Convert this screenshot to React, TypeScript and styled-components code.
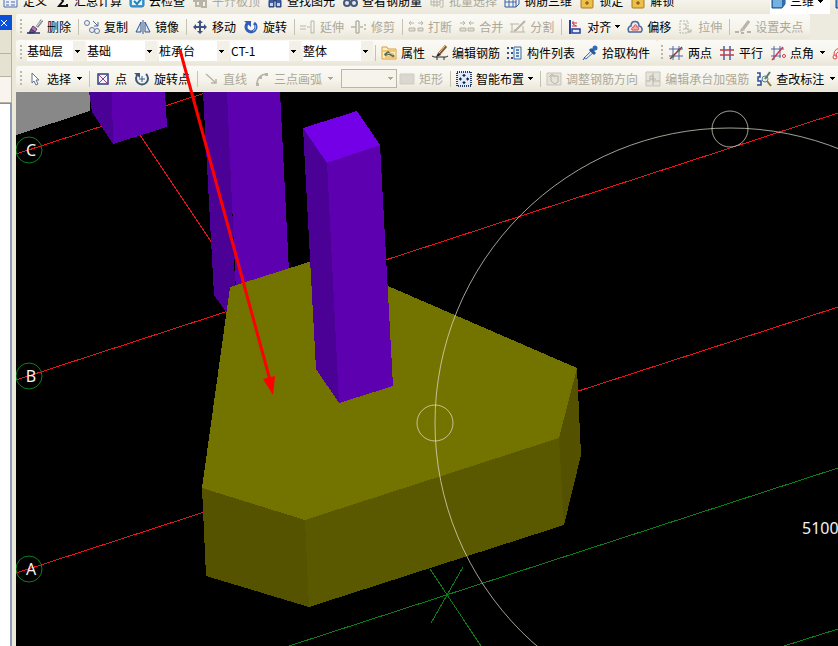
import React from "react";
import styled, { createGlobalStyle } from "styled-components";

const GlobalStyle = createGlobalStyle`
  * { box-sizing: border-box; }
  html, body { margin: 0; }
  body {
    overflow: hidden;
    background: #ece9d8;
    color: #000;
    font: 12px/16px "Noto Sans CJK SC", sans-serif;
  }
`;

const Page = styled.div`
  position: relative;
  display: flex;
  flex-direction: column;
  height: 100vh;
  overflow: hidden;
`;

const Body = styled.div`
  display: flex;
  flex: 1;
  min-height: 0;
`;

const TopBar = styled.div`
  display: flex;
  align-items: flex-end;
  height: 14px;
  flex: none;
  padding-left: 3px;
  overflow: hidden;
  background: linear-gradient(#f5f4ec, #ebe8da);
`;

const SidePanel = styled.aside`
  display: flex;
  flex-direction: column;
  width: 12px;
  flex: none;
  padding-top: 1px;
`;

const CloseButton = styled.button`
  display: flex;
  justify-content: center;
  align-items: center;
  height: 15px;
  padding: 0 4px 0 0;
  border: 0;
  background: #0b50d8;
`;

const SideTab = styled.div<{ $tone: string; $height: number }>`
  height: ${(p) => p.$height}px;
  border-right: 1px solid #b5b3a8;
  border-bottom: 1px solid #b5b3a8;
  background: ${(p) => p.$tone};
`;

const SideContent = styled.div`
  flex: 1;
  border-top: 1px solid #7f8fb0;
  border-right: 2px solid #8e9bb8;
  background: #fff;
`;

const Splitter = styled.div`
  width: 4px;
  flex: none;
  background: #ece9d8;
`;

const Main = styled.main`
  display: flex;
  flex-direction: column;
  flex: 1;
  min-width: 0;
`;

const ToolRow = styled.div`
  display: flex;
  height: 26px;
  flex: none;
  background: #edebdf;
`;

const Bar = styled.div<{ $fill?: boolean }>`
  display: flex;
  align-items: center;
  flex: ${(p) => (p.$fill ? "1 0 auto" : "none")};
  height: 25px;
  border-radius: 3px;
  background: linear-gradient(#fbfaf6, #f5f3ea 60%, #e9e6d8);
`;

const Grip = styled.span`
  width: 2px;
  height: 16px;
  flex: none;
  margin: 0 5px 0 4px;
  background: repeating-linear-gradient(#bcb9a8 0 2px, transparent 2px 4px);
`;

const Separator = styled.span`
  width: 6px;
  height: 16px;
  flex: none;
  border-left: 1px solid #c5c2b2;
`;

const Tool = styled.button<{ $boxed?: boolean; $gap?: number }>`
  display: flex;
  align-items: center;
  gap: ${(p) => p.$gap ?? 4}px;
  height: 26px;
  flex: none;
  padding: 0 7px 0 0;
  border: 0;
  background: ${(p) => (p.$boxed ? "#fff" : "transparent")};
  color: #000;
  font: inherit;
  white-space: nowrap;

  &:disabled {
    color: #aca899;
  }
`;

const TopSpacer = styled.span`
  flex: 1;
`;

const TopEdge = styled.div`
  display: flex;
  gap: 4px;
  width: 68px;
  flex: none;
`;

const Field = styled.div<{ $width: number }>`
  display: grid;
  align-items: center;
  width: ${(p) => p.$width}px;
  height: 20px;
  flex: none;
  margin: 0 2px 3px 0;
  background: linear-gradient(to left, #f3f1e7 12px, #fff 12px);

  > * {
    grid-area: 1 / 1;
  }
  > svg {
    justify-self: end;
    margin-right: 5px;
    pointer-events: none;
  }
`;

const Select = styled.select`
  appearance: none;
  width: 100%;
  height: 20px;
  padding: 0 12px 0 0;
  border: 0;
  background: transparent;
  color: #000;
  font: inherit;
`;

const EmptyField = styled(Field)`
  height: 19px;
  margin: 0 2px 0 1px;
  border: 1px solid #b9b6a6;
  background: #f5f3ea;
  color: #aca899;

  > svg {
    margin-right: 3px;
  }
  > select {
    height: 16px;
  }
`;

const Viewport = styled.section`
  flex: 1;
  min-height: 0;
  background: #000;

  > svg {
    display: block;
    width: 100%;
    height: 100%;
  }
`;

const Annotation = styled.svg`
  position: absolute;
  top: 0;
  left: 0;
  pointer-events: none;
`;

const Glyph = styled.svg`
  width: 16px;
  height: 16px;
  flex: none;
  fill: none;
`;

const Caption = styled.span<{ $wide?: boolean }>`
  padding-right: ${(p) => (p.$wide ? 2 : 0)}px;
`;

const ArrowGlyph = styled.svg`
  width: 5px;
  height: 3px;
  flex: none;
  fill: currentColor;
`;

const Drop = () => (
  <ArrowGlyph viewBox="0 0 5 3" shapeRendering="crispEdges">
    <path d="M0 0h5v1H4v1H3v1H2V2H1V1H0z" />
  </ArrowGlyph>
);

const navy = "#30528f";
const gray = "#b8b5a7";

const icons: Record<string, React.ReactNode> = {
  define: (
    <>
      <path d="M1 4h13v10H1z" fill="#eaf1fb" stroke="#4c6ca8" />
      <path d="M3 9h3M8 9h4M3 12h3M8 12h4" stroke="#4c6ca8" />
    </>
  ),
  sigma: <path d="M13 4V3H5l4 5-4 5h8v-2" stroke="#111" strokeWidth="2" />,
  cloud: (
    <>
      <rect x="1" y="1" width="14" height="13" rx="2" fill="#3d9bd0" stroke="#2c7fb2" />
      <path d="M3 4h10v8H3z" fill="#e6f6fd" />
      <path d="M5 8l3 3 5-6" stroke="#2280bd" strokeWidth="2" />
    </>
  ),
  slab: <path d="M2 2h11v6H2zM4 8v5h4V8M10 8v6h4V6" stroke={gray} strokeWidth="2" />,
  find: (
    <>
      <path d="M2 14V8l2-5h3v11zM9 14V3h3l2 5v6z" fill="#3d5c9c" stroke="#28427a" />
      <path d="M3 10h3v3H3zM10 10h3v3h-3z" fill="#c5d4f1" />
      <path d="M7 7h2" stroke="#28427a" strokeWidth="3" />
    </>
  ),
  glasses: (
    <>
      <circle cx="5" cy="10" r="3" fill="#e1e8f4" stroke="#495878" strokeWidth="2" />
      <circle cx="12" cy="10" r="3" fill="#e1e8f4" stroke="#495878" strokeWidth="2" />
    </>
  ),
  batch: <path d="M2 3h9v9H2zM5 6v8M8 6v8M11 7h3v7h-3M2 9h9" stroke={gray} />,
  rebar3d: (
    <>
      <path d="M1 5h11v9H1zM4 2h11v9l-3 3M4 2L1 5M15 2l-3 3" stroke="#3158a0" />
      <path d="M5 5v9M9 5v9M1 9h11" stroke="#4169b0" />
    </>
  ),
  lock: (
    <>
      <path d="M5 7V3h6v4" stroke="#8e7b4c" strokeWidth="2" />
      <rect x="2" y="5" width="12" height="10" rx="1" fill="#ecc04b" stroke="#a67a1f" />
      <path d="M8 8v4M6 10h4" stroke="#704b12" />
    </>
  ),
  cube: (
    <>
      <path d="M2 5l3-3h10v9l-3 4H2z" fill="#4c8fc8" stroke="#214f85" />
      <path d="M3 5h9v9H3z" fill="#76b2df" />
      <path d="M12 5l3-3v9l-3 3z" fill="#306caa" />
    </>
  ),
  erase: (
    <>
      <path d="M15 1l-5 7" stroke="#7f8a8f" strokeWidth="3" />
      <path d="M15 1l-5 6" stroke="#eef0e8" />
      <path d="M6 7l4 3-2 3-4-3z" fill="#b078b0" stroke="#5c3f70" />
      <path d="M4 10l4 3-2 1H2z" fill="#7a4a86" stroke="#40355f" />
      <path d="M0 14h13" stroke="#26356b" strokeWidth="1.5" />
    </>
  ),
  copy: (
    <>
      <circle cx="3" cy="4" r="2.5" fill="#eef1f7" stroke="#66779c" />
      <circle cx="8" cy="11" r="2.5" fill="#eef1f7" stroke="#66779c" />
      <circle cx="13" cy="12" r="2.5" fill="#eef1f7" stroke="#66779c" />
      <path d="M9 2l5 5M14 3v4h-4" stroke="#4c6497" />
    </>
  ),
  mirror: (
    <>
      <path d="M6 3v10H1zM10 3v10h5z" fill="#dce8f5" stroke={navy} />
      <path d="M8 1v14" stroke={navy} />
    </>
  ),
  move: (
    <>
      <path d="M8 3v10M3 8h10" stroke="#3d5280" strokeWidth="2" />
      <path d="M8 1l3 3H5zM8 15l3-3H5zM1 8l3-3v6zM15 8l-3-3v6z" fill="#3d5280" />
    </>
  ),
  rotate: (
    <>
      <path d="M11 4a5 5 0 1 1-6 0" stroke="#315eb6" strokeWidth="3" />
      <path d="M1 2h7v6z" fill="#315eb6" />
      <path d="M12 6a4 4 0 0 1-2 6" stroke="#a4c4ef" />
    </>
  ),
  extend: <path d="M0 7h6M0 10h6M7 8h3M11 2v12M14 2v12M11 2h3M11 14h3" stroke={gray} />,
  trim: <path d="M0 8h5M5 2v12M8 2v12M5 2h3M5 14h3M9 8h3M13 6h2M13 10h2" stroke={gray} strokeWidth="1.5" />,
  split: (
    <>
      <path d="M1 4h5M3 2L1 4l2 2M10 4h5M13 2l2 2-2 2" stroke={gray} />
      <path d="M1 9h6v3H1zM10 9h5v3h-5z" fill="#e1dfd4" stroke={gray} />
    </>
  ),
  merge: (
    <>
      <path d="M1 4h5M4 2l2 2-2 2M10 4h5M12 2l-2 2 2 2" stroke={gray} />
      <path d="M1 9h6v3H1zM9 9h6v3H9z" fill="#e1dfd4" stroke={gray} />
    </>
  ),
  cut: (
    <>
      <path d="M0 5h9M2 5v8M0 13h15M13 7v6" stroke={gray} />
      <path d="M15 2l-9 9-2 1" stroke={gray} strokeWidth="2" />
    </>
  ),
  align: (
    <>
      <path d="M3 1v14" stroke="#263f99" strokeWidth="2" />
      <path d="M5 4h5M5 7h5" stroke="#d12b45" />
      <path d="M5 10h8v4H5z" fill="#e4ecfa" stroke="#263f99" strokeWidth="1.5" />
      <path d="M6 2v3l3 2" stroke="#d12b45" />
    </>
  ),
  offset: (
    <>
      <path d="M2 13c-2-3 0-6 2-6 0-6 8-6 8 0 3 0 4 4 2 6z" fill="#f7e3df" stroke="#47679d" strokeWidth="1.5" />
      <path d="M5 11c-1-1 0-3 2-3 0-3 3-3 3 0 2 0 2 2 1 3z" fill="#f5b0a9" stroke="#ce5557" />
    </>
  ),
  stretch: (
    <>
      <path d="M2 2h8v12H2z" stroke={gray} strokeDasharray="2 1" />
      <path d="M5 5h3v5H5M8 9l5 4M10 13h3v-3" stroke={gray} />
    </>
  ),
  gripPoint: (
    <>
      <path d="M14 2l-6 8" stroke={gray} strokeWidth="3" />
      <path d="M6 9l4 2-5 2z" fill={gray} />
      <path d="M0 13h4M6 14h3M12 13h4" stroke={gray} strokeWidth="2" />
    </>
  ),
  property: (
    <>
      <path d="M1 2h5l1 2h8v10H1z" fill="#fff1b9" stroke="#e09a3c" />
      <path d="M2 6h12M12 8v5M4 12h10" stroke="#e09a3c" />
      <path d="M3 9l4-3 7 5-2 1-4-2-4 1z" fill="#596b52" />
      <path d="M6 9l3-1 3 2" stroke="#dac684" />
    </>
  ),
  editBar: (
    <>
      <path d="M0 11l2 1h12l2-1M5 12v3M12 12v3" stroke="#2a2b31" />
      <path d="M14 1L7 9" stroke="#8a5230" strokeWidth="3" />
      <path d="M13 1L7 8" stroke="#f2ce86" />
      <path d="M4 12l2-4 3 2z" fill="#202432" />
    </>
  ),
  list: (
    <>
      <path d="M0 3h2M0 8h2M0 13h2M4 3h2M4 8h2M4 13h2" stroke="#31568f" strokeWidth="2" />
      <path d="M7 2h7v12H7z" fill="#e8f1fc" stroke="#426995" />
      <path d="M9 5h3M9 8h3M9 11h3" stroke="#5b88bd" strokeWidth="2" />
    </>
  ),
  picker: (
    <>
      <path d="M10 5l2 2-8 7-2-1z" fill="#dceaf7" stroke="#4474a9" />
      <path d="M8 4l5 5M11 5l2-2" stroke="#285a9c" strokeWidth="3" />
      <circle cx="13" cy="3" r="2.5" fill="#326eb7" />
      <path d="M1 15l2-3" stroke="#285a9c" />
    </>
  ),
  twoPoint: (
    <>
      <path d="M1 4h14M1 11h14M5 1v14M11 1v14" stroke="#5265a5" />
      <path d="M2 14L14 2" stroke="#8c3045" strokeWidth="1.5" />
      <circle cx="5" cy="11" r="1.5" fill="#506b4d" />
      <circle cx="11" cy="5" r="1.5" fill="#506b4d" />
    </>
  ),
  parallel: (
    <>
      <path d="M5 1v14M11 1v14" stroke="#4960ab" strokeWidth="1.5" />
      <path d="M1 5h14M1 10h14" stroke="#c33b43" strokeWidth="1.5" />
    </>
  ),
  angle: (
    <>
      <path d="M1 4h13M1 11h10M4 1v14M10 1v12" stroke="#5265a5" />
      <path d="M2 15L13 2" stroke="#c83d4c" strokeWidth="1.5" />
      <circle cx="14" cy="11" r="1.5" fill="#fff" stroke="#d7363b" />
    </>
  ),
  arcAxis: (
    <>
      <path d="M2 10a6 6 0 0 1 9-6M4 12a6 6 0 0 1 9-6" stroke="#df4747" />
      <circle cx="3" cy="12" r="2" stroke="#df4747" />
    </>
  ),
  select: <path d="M5 2v10l2-2 2 4 2-1-2-4h3z" fill="#fff" stroke="#61718e" />,
  point: (
    <>
      <path d="M3 3h10v10H3z" fill="#f0f4ff" stroke="#303d87" strokeWidth="1.5" />
      <path d="M4 4l8 8M12 4l-8 8" stroke="#a03c74" />
    </>
  ),
  rotatePoint: (
    <>
      <path d="M4 3a6 6 0 1 0 8 0" stroke="#3c587d" strokeWidth="2" />
      <path d="M0 2h6v5z" fill="#3c587d" />
      <path d="M8 5v6M5 8h6" stroke="#345c91" />
    </>
  ),
  line: <path d="M3 3l10 9M8 12h5V8" stroke={gray} strokeWidth="1.5" />,
  arc: (
    <>
      <path d="M3 13C3 7 7 3 13 3" stroke={gray} strokeWidth="1.5" />
      <path d="M2 12h3v3H2zM5 5h3v3H5zM11 2h3v3h-3z" fill={gray} />
    </>
  ),
  rect: <path d="M1 3h14v10H1z" fill="#d9d7cf" stroke="#cfcdc4" />,
  smart: (
    <>
      <path d="M1 1h14v14H1z" fill="#dfeafa" stroke="#283e65" strokeWidth="2" strokeDasharray="1 1" />
      <path d="M8 3v3M8 10v3M3 8h3M10 8h3" stroke="#14213f" />
      <path d="M8 3l2 2H6zM8 13l2-2H6zM3 8l2-2v4zM13 8l-2-2v4z" fill="#14213f" />
    </>
  ),
  adjust: (
    <>
      <path d="M1 2h14v12H1z" fill="#e5e3da" stroke="#c7c5bb" />
      <path d="M5 5h7v6l-3 2-4-3zM3 6l3-3 3 3" stroke={gray} />
    </>
  ),
  stiff: (
    <>
      <path d="M1 1h14v14H1z" fill="#e5e3da" stroke="#c7c5bb" />
      <path d="M1 10h4V5h3v5h7M8 2v12M5 8h6" stroke={gray} />
    </>
  ),
  inspect: (
    <>
      <path d="M1 2h3v4H2v4h3v4H1" stroke="#284da0" strokeWidth="1.5" />
      <circle cx="9" cy="8" r="3" fill="#d9edf6" stroke="#607d8c" />
      <path d="M11 10l4 5" stroke="#8a7a3c" strokeWidth="2" />
      <path d="M14 1L9 8" stroke="#567b64" strokeWidth="2" />
    </>
  ),
};

type ItemProps = {
  icon: string;
  label?: string;
  disabled?: boolean;
  drop?: boolean;
  wide?: boolean;
  boxed?: boolean;
};

const Item = ({ icon, label, disabled, drop, wide, boxed }: ItemProps) => (
  <Tool disabled={disabled} $boxed={boxed} aria-label={label || icon}>
    <Glyph viewBox="0 0 16 16" aria-hidden="true">{icons[icon]}</Glyph>
    {label && <Caption $wide={wide}>{label}</Caption>}
    {drop && <Drop />}
  </Tool>
);

const Combo = ({ name, value, width = 70 }: { name: string; value: string; width?: number }) => (
  <Field $width={width}>
    <Select aria-label={name} defaultValue={value}>
      <option>{value}</option>
    </Select>
    <Drop />
  </Field>
);

const axisLabels = [
  { name: "C", y: 150 },
  { name: "B", y: 376 },
  { name: "A", y: 569 },
];

const Scene = () => (
  <svg viewBox="16 92 822 554" preserveAspectRatio="xMinYMin slice" role="img" aria-label="桩承台">
    <g shapeRendering="crispEdges">
      <path d="M16 92h74v19L16 135z" fill="#888" />
      <g stroke="#e8141c" fill="none">
        <path d="M16 154L208 92M140 135L212 243M16 380L838 113M16 573L838 307" />
      </g>
      <g stroke="#0c7f1d" fill="none">
        <path d="M289 646L838 468M784 646L838 629M430 569L481 646M463 567L431 623" />
      </g>
      <path d="M89 92h24v52L92 112z" fill="#4b0096" />
      <path d="M112 92h53l2 35-54 17z" fill="#5c00b0" />
      <path d="M203 92h25l8 220-10 0-12-17z" fill="#4b0096" />
      <path d="M227 92h53l9 180-53 20z" fill="#5c00b0" />
      <path d="M230 287L312 261 388 286 577 368 559 438 305 520 202 488z" fill="#737300" />
      <path d="M202 488L305 520 309 607 206 576z" fill="#555200" />
      <path d="M305 520L559 438 564 525 309 607z" fill="#5a5900" />
      <path d="M577 368L581 455 564 525 559 438z" fill="#545200" />
      <path d="M303 128L327 163 339 403 316 369z" fill="#4b0096" />
      <path d="M327 163L380 145 393 386 339 403z" fill="#5c00b0" />
      <path d="M303 128L357 111 380 145 327 163z" fill="#7300e6" />
    </g>
    <g stroke="#e4e4d4" strokeOpacity="0.7" fill="none">
      <circle cx="730" cy="423" r="295" />
      <circle cx="435" cy="423" r="18" />
      <circle cx="730" cy="129" r="18" />
    </g>
    {axisLabels.map((axis) => (
      <g key={axis.name}>
        <circle cx="29" cy={axis.y} r="13" fill="none" stroke="#0c7f1d" />
        <text x="31" y={axis.y + 6} textAnchor="middle" fill="#f2f2f2" fontSize="16" fontFamily="Noto Sans, sans-serif">
          {axis.name}
        </text>
      </g>
    ))}
    <text x="802" y="534" fill="#f2f2f2" fontSize="16" fontFamily="Noto Sans, sans-serif">5100</text>
  </svg>
);

export default function App() {
  return (
    <Page>
      <GlobalStyle />
      <TopBar>
        <Item icon="define" label="定义" />
        <Item icon="sigma" label="汇总计算" />
        <Item icon="cloud" label="云检查" />
        <Item icon="slab" label="平齐板顶" disabled />
        <Item icon="find" label="查找图元" />
        <Item icon="glasses" label="查看钢筋量" />
        <Item icon="batch" label="批量选择" disabled />
        <Item icon="rebar3d" label="钢筋三维" />
        <Item icon="lock" label="锁定" />
        <Item icon="lock" label="解锁" />
        <TopSpacer />
        <TopEdge>
          <Item icon="cube" label="三维" drop boxed />
          <Item icon="cube" />
        </TopEdge>
      </TopBar>
      <Body>
        <SidePanel>
          <CloseButton aria-label="关闭">
            <svg width="8" height="8" viewBox="0 0 8 8" stroke="#fff">
              <path d="M1 1l6 6M7 1L1 7" />
            </svg>
          </CloseButton>
          <SideTab $height={24} $tone="#e6e2d2" />
          <SideTab $height={23} $tone="#e6e2d2" />
          <SideTab $height={26} $tone="#f7f5ee" />
          <SideContent />
        </SidePanel>
        <Splitter />
        <Main>
          <ToolRow>
            <Bar>
              <Grip />
              <Item icon="erase" label="删除" />
              <Separator />
              <Item icon="copy" label="复制" />
              <Item icon="mirror" label="镜像" />
              <Separator />
              <Item icon="move" label="移动" />
              <Item icon="rotate" label="旋转" />
              <Separator />
              <Item icon="extend" label="延伸" disabled />
              <Item icon="trim" label="修剪" disabled />
              <Separator />
              <Item icon="split" label="打断" disabled />
              <Item icon="merge" label="合并" disabled />
              <Item icon="cut" label="分割" disabled />
              <Separator />
              <Item icon="align" label="对齐" drop />
              <Item icon="offset" label="偏移" />
              <Item icon="stretch" label="拉伸" disabled />
              <Separator />
              <Item icon="gripPoint" label="设置夹点" disabled />
            </Bar>
          </ToolRow>
          <ToolRow>
            <Bar>
              <Grip />
              <Combo name="楼层" value="基础层" width={58} />
              <Combo name="构件类型" value="基础" />
              <Combo name="构件" value="桩承台" />
              <Combo name="名称" value="CT-1" />
              <Combo name="单元" value="整体" />
              <Separator />
              <Item icon="property" label="属性" />
              <Item icon="editBar" label="编辑钢筋" />
              <Item icon="list" label="构件列表" />
              <Item icon="picker" label="拾取构件" />
            </Bar>
            <Bar $fill>
              <Grip />
              <Item icon="twoPoint" label="两点" />
              <Item icon="parallel" label="平行" />
              <Item icon="angle" label="点角" drop wide />
              <Item icon="arcAxis" />
            </Bar>
          </ToolRow>
          <ToolRow>
            <Bar $fill>
              <Grip />
              <Item icon="select" label="选择" drop wide />
              <Separator />
              <Item icon="point" label="点" />
              <Item icon="rotatePoint" label="旋转点" />
              <Separator />
              <Item icon="line" label="直线" disabled />
              <Item icon="arc" label="三点画弧" disabled drop wide />
              <EmptyField $width={56}>
                <Select aria-label="画弧方式" disabled />
                <Drop />
              </EmptyField>
              <Item icon="rect" label="矩形" disabled />
              <Separator />
              <Item icon="smart" label="智能布置" drop />
              <Separator />
              <Item icon="adjust" label="调整钢筋方向" disabled />
              <Item icon="stiff" label="编辑承台加强筋" disabled />
              <Item icon="inspect" label="查改标注" drop wide />
            </Bar>
          </ToolRow>
          <Viewport>
            <Scene />
          </Viewport>
        </Main>
      </Body>
      <Annotation width="300" height="400" viewBox="0 0 300 400" aria-hidden="true">
        <path d="M180 50L270 380" stroke="#f00" strokeWidth="3" />
        <path d="M263 379L275 376 273 395z" fill="#f00" />
      </Annotation>
    </Page>
  );
}
